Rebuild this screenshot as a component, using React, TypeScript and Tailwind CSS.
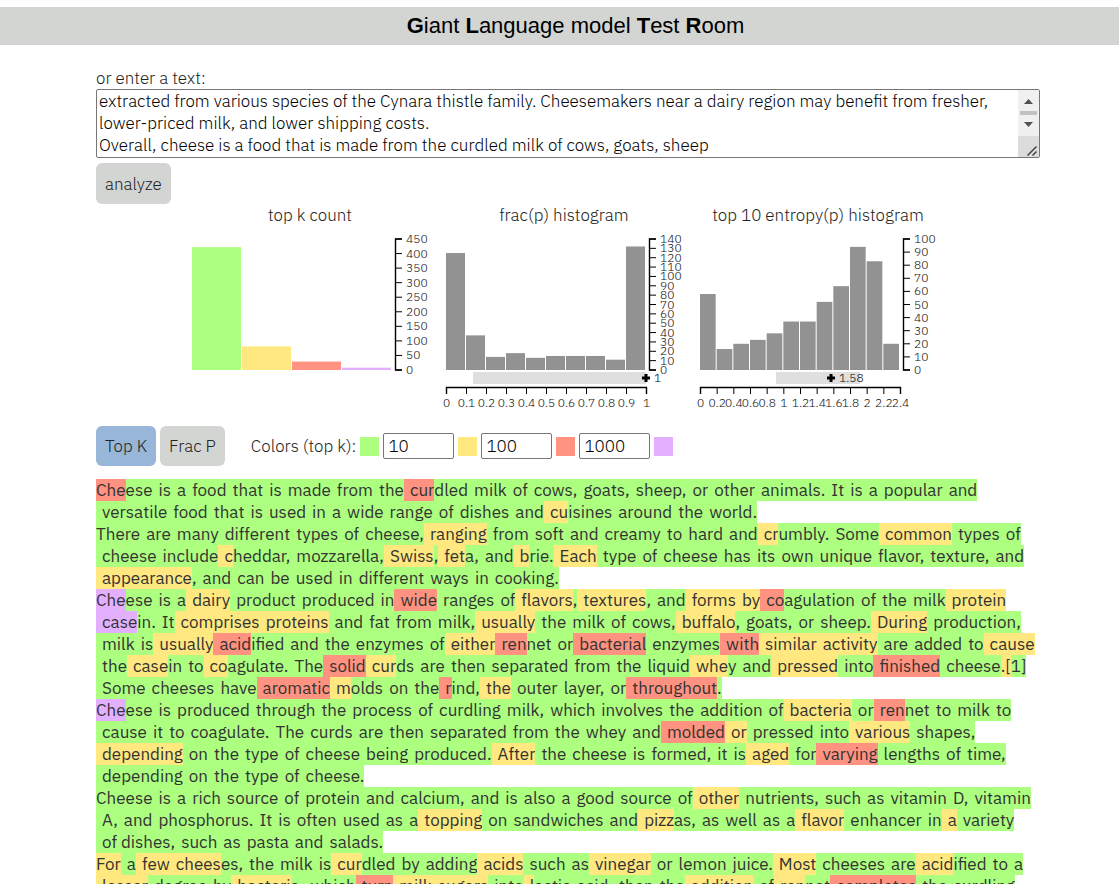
import { useState } from "react";
import { clsx } from "clsx";

type Rank = "g" | "y" | "r" | "p";

const RANK_BG: Record<Rank, string> = {
  g: "bg-[#adff80]",
  y: "bg-[#ffe880]",
  r: "bg-[#ff9280]",
  p: "bg-[#e3b0ff]",
};

// {y: word} marks a run of another rank, everything else is rank g
const PARAGRAPHS = [
  "{r:Che}ese is a food that is made from the{r: cur}dled milk of cows, goats, sheep, or other animals. It is a popular and versatile food that is used in a wide range of dishes and{y: cu}isines around the world.",
  "There are many different types of cheese,{y: ranging} from soft and creamy to hard and{y: cr}umbly. Some{y: common} types of cheese include{y: c}heddar, mozzarella,{y: Swiss},{y: fet}a, and{y: b}rie.{y: Each} type of cheese has its own unique flavor, texture, and{y: appearance}, and can be used in different ways in cooking.",
  "{p:Che}ese is a{y: dairy} product produced in{r: wide} ranges of{y: flavors},{y: textures}, and{y: forms by}{r: co}agulation of the milk{y: protein}{p: case}in. It{y: comprises proteins} and fat from milk,{y: usually} the milk of cows,{y: buffalo}, goats, or sheep.{y: During} production, milk is{y: usually}{r: acid}ified and the enzymes of{y: either}{r: ren}net or{r: bacterial} enzymes{r: with}{y: similar activity} are added to{y: cause} the{y: case}in to{y: co}agulate. The{r: solid}{y: cur}ds are then separated from the liquid{y: whe}y and{y: pressed} into{r: finished} cheese{y:.[}1] Some cheeses have{r: aromatic}{y: m}olds on the{r: r}ind,{y: the} outer layer, or{r: throughout}.",
  "{p:Che}ese is produced through the process of curdling milk, which involves the addition of{y: bacteria} or{r: ren}net to milk to cause it to coagulate. The curds are then separated from the whey and{r: molded}{y: or} pressed into{y: various} shapes,{y: depending} on the type of cheese being produced.{y: After} the cheese is formed, it is{y: aged} for{r: varying} lengths of time, depending on the type of cheese.",
  "Cheese is a rich source of protein and calcium, and is also a good source of{y: other} nutrients, such as vitamin D, vitamin A, and phosphorus. It is often used as a{y: topping} on sandwiches and{y: pizz}as, as well as a{y: flavor} enhancer in{y: a} variety of\u00a0dishes, such as pasta and salads.",
  "{y:For} a{y: few chees}es, the milk is{y: cur}dled by adding{y: acids} such as{y: vinegar} or lemon juice.{y: Most} cheeses are{y: acid}ified to a{y: lesser} degree by{y: bacteri}a, which{r: turn}{y: milk sugars} into{y: l}actic acid, then the{y: addition} of{y: ren}net{r: completes} the curdling",
];

const TEXT =
  "extracted from various species of the Cynara thistle family. Cheesemakers near a dairy region may benefit from fresher, lower-priced milk, and lower shipping costs.\nOverall, cheese is a food that is made from the curdled milk of cows, goats, sheep";

type Token = { text: string; rank: Rank };

// tokens grouped by word, so that a line never breaks inside one
function parse(text: string) {
  const words: Token[][] = [];
  for (const m of text.matchAll(/\{([gyrp]):([^}]*)\}|([^{]+)/g)) {
    const rank = (m[1] ?? "g") as Rank;
    for (const part of (m[2] ?? m[3]).match(/ ?[^ ]+/g) ?? []) {
      if (part.startsWith(" ") || words.length === 0) words.push([]);
      words[words.length - 1].push({ text: part, rank });
    }
  }
  return words;
}

function Paragraph({ text }: { text: string }) {
  return (
    <p>
      {parse(text).map((word, i) => (
        <span key={i} className="inline-block align-top whitespace-pre">
          {word.map((t, j) => (
            <span
              key={j}
              className={clsx("inline-block align-top", RANK_BG[t.rank], t.text.startsWith(" ") && "pl-0.5")}
            >
              {t.text}
            </span>
          ))}
        </span>
      ))}
    </p>
  );
}

type ChartProps = {
  title: string;
  bars: { value: number; fill: string }[];
  max: number;
  step: number;
  xLabels?: string[];
  range?: { from: number; to: number; mean: number; label: string };
};

const X0 = 7;
const TOP = 13;
const BASE = 144;

function Chart({ title, bars, max, step, xLabels, range }: ChartProps) {
  const y = (v: number) => BASE - (v / max) * (BASE - TOP);
  const bw = 200 / bars.length;
  const ticks = Array.from({ length: max / step + 1 }, (_, i) => i * step);

  return (
    <figure className="w-[250px]">
      <figcaption className="text-center">{title}</figcaption>
      <svg width="250" height="190" className="block text-[12px]" role="img" aria-label={title}>
        {bars.map((b, i) => (
          <rect key={i} x={X0 + i * bw} y={y(b.value)} width={bw - 1} height={BASE - y(b.value)} fill={b.fill} />
        ))}
        <path d={`M217 ${TOP}H210.5V${BASE}H217`} fill="none" stroke="#000" strokeWidth="1.4" />
        {ticks.map((t) => (
          <g key={t}>
            <path d={`M210 ${y(t)}h7`} stroke="#000" />
            <text x="221" y={y(t) + 4} fill="#111">
              {t}
            </text>
          </g>
        ))}
        {range && (
          <g>
            <rect x={range.from} y="146" width={range.to - range.from} height="12" fill="#dfdfdf" />
            <path d={`M${range.mean - 4} 152h8M${range.mean} 148v8`} stroke="#000" strokeWidth="3" />
            <text x={range.mean + 8} y="156" fill="#000">
              {range.label}
            </text>
          </g>
        )}
        {xLabels && (
          <g>
            <path d={`M${X0 + 0.5} 168V161.5H${X0 + 200.5}V168`} fill="none" stroke="#000" strokeWidth="1.4" />
            {xLabels.map((l, i) => {
              const x = X0 + 0.5 + (i * 200) / (xLabels.length - 1);
              return (
                <g key={l}>
                  <path d={`M${x} 161v7`} stroke="#000" />
                  <text x={x} y="181" textAnchor="middle" fill="#111">
                    {l}
                  </text>
                </g>
              );
            })}
          </g>
        )}
      </svg>
    </figure>
  );
}

const gray = (values: number[]) => values.map((value) => ({ value, fill: "#929292" }));

function Swatch({ rank }: { rank: Rank }) {
  return <span className={clsx("size-[19px]", RANK_BG[rank])} />;
}

export default function App() {
  const [text, setText] = useState(TEXT);
  const [mode, setMode] = useState<"topk" | "fracp">("topk");
  const [limits, setLimits] = useState(["10", "100", "1000"]);
  const ranks: Rank[] = ["g", "y", "r"];

  return (
    <div className="bg-white pt-[7px] font-['IBM_Plex_Sans','Open_Sans',sans-serif] text-[17px] leading-[22px] font-light text-[#222]">
      <header className="bg-[#d3d5d3] pl-8 text-center font-['Liberation_Sans',Arial,sans-serif] text-[22px] leading-[38px] font-normal text-black">
        <h1>
          <b>G</b>iant <b>L</b>anguage model <b>T</b>est <b>R</b>oom
        </h1>
      </header>

      <main className="pt-[22px] pr-[79px] pl-24">
        <label htmlFor="text" className="block">
          or enter a text:
        </label>
        <div className="flex rounded-xs border border-[#767676]">
          <textarea
            id="text"
            rows={3}
            value={text}
            onChange={(e) => setText(e.target.value)}
            className="block min-w-0 flex-1 resize-none overflow-hidden px-0.5 pb-px text-black outline-none"
          />
          <div className="flex w-[21px] flex-col bg-[#f0f0f0]" aria-hidden="true">
            <svg viewBox="0 0 21 46" className="h-[46px] w-full">
              <path d="M6 14l4.500-5 4.500 5z" fill="#505050" />
              <rect x="2" y="21" width="17" height="4" fill="#c1c1c1" />
              <path d="M6 32l4.500 5 4.500-5z" fill="#505050" />
            </svg>
            <svg viewBox="0 0 21 21" className="h-[21px] w-full bg-[#dcdcdc]">
              <path d="M9.500 19.500l9-9M14.500 19.500l4-4" stroke="#444" strokeWidth="1.500" fill="none" />
            </svg>
          </div>
        </div>
        <button className="mt-[5px] block h-[41px] rounded-md bg-[#d3d5d3] px-[9px]">analyze</button>

        <section className="flex justify-center gap-1 pr-2">
          <Chart
            title="top k count"
            bars={[
              { value: 422, fill: "#adff80" },
              { value: 81, fill: "#ffe880" },
              { value: 29, fill: "#ff9280" },
              { value: 8, fill: "#e3b0ff" },
            ]}
            max={450}
            step={50}
          />
          <Chart
            title="frac(p) histogram"
            bars={gray([125, 37, 14, 18, 13, 15, 15, 15, 11, 132])}
            max={140}
            step={10}
            xLabels={["0", "0.1", "0.2", "0.3", "0.4", "0.5", "0.6", "0.7", "0.8", "0.9", "1"]}
            range={{ from: 34, to: 207, mean: 207, label: "1" }}
          />
          <Chart
            title="top 10 entropy(p) histogram"
            bars={gray([58, 16, 20, 23, 28, 37, 37, 52, 64, 94, 83, 20])}
            max={100}
            step={10}
            xLabels={["0", "0.2", "0.4", "0.6", "0.8", "1", "1.2", "1.4", "1.6", "1.8", "2", "2.2", "2.4"]}
            range={{ from: 83, to: 167, mean: 138, label: "1.58" }}
          />
        </section>

        <section className="mt-2.5 flex items-center gap-1">
          <button
            onClick={() => setMode("topk")}
            className={clsx("h-10 rounded-md px-[9px]", mode === "topk" ? "bg-[#98b7d8]" : "bg-[#d3d5d3]")}
          >
            Top K
          </button>
          <button
            onClick={() => setMode("fracp")}
            className={clsx("h-10 rounded-md px-[9px]", mode === "fracp" ? "bg-[#98b7d8]" : "bg-[#d3d5d3]")}
          >
            Frac P
          </button>
          <span className="ml-[22px]">Colors (top k):</span>
          {ranks.map((rank, i) => (
            <label key={rank} className="flex items-center gap-1">
              <Swatch rank={rank} />
              <input
                aria-label={`limit ${i + 1}`}
                value={limits[i]}
                onChange={(e) => setLimits(limits.map((l, j) => (j === i ? e.target.value : l)))}
                className="h-[26px] w-[71px] rounded-xs border border-[#767676] px-1 text-black"
              />
            </label>
          ))}
          <Swatch rank="p" />
        </section>

        <section className="mt-[13px] font-normal text-[#333]">
          {PARAGRAPHS.map((p, i) => (
            <Paragraph key={i} text={p} />
          ))}
        </section>
      </main>
    </div>
  );
}
